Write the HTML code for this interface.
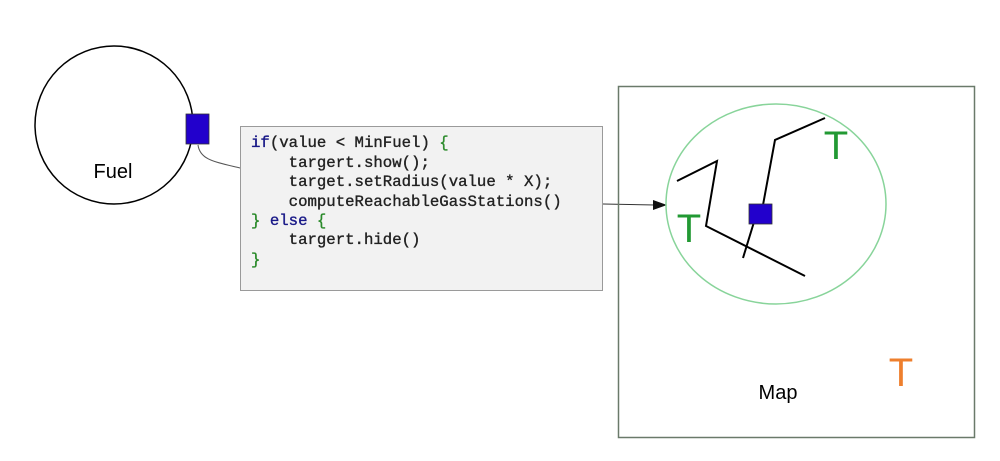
<!DOCTYPE html><html><head><style>body{margin:0;background:#fff} .c text{white-space:pre}</style></head><body>
<svg width="1000" height="456" xmlns="http://www.w3.org/2000/svg">
<circle cx="114" cy="125" r="79" fill="none" stroke="#000" stroke-width="1.5"/>
<text x="113" y="178" font-family="Liberation Sans, sans-serif" font-size="20" text-anchor="middle">Fuel</text>
<path d="M198 145 C200 160 215 162 240 168" fill="none" stroke="#555" stroke-width="1"/>
<rect x="186" y="114" width="23" height="30" fill="#2200cc" stroke="#333" stroke-width="0.8"/>
<rect x="240.5" y="126.5" width="362" height="164" fill="#f2f2f2" stroke="#9a9a9a"/>
<g class="c" font-family="Liberation Mono, monospace" font-size="15.7" fill="#222" stroke="#222" stroke-width="0.35">
<text x="251" y="147"><tspan fill="#1a1a88" stroke="#1a1a88">if</tspan>(value &lt; MinFuel) <tspan fill="#2a8a2a" stroke="#2a8a2a">{</tspan></text>
<text x="251" y="167">    targert.show();</text>
<text x="251" y="186">    target.setRadius(value * X);</text>
<text x="251" y="206">    computeReachableGasStations()</text>
<text x="251" y="225"><tspan fill="#2a8a2a" stroke="#2a8a2a">}</tspan> <tspan fill="#1a1a88" stroke="#1a1a88">else</tspan> <tspan fill="#2a8a2a" stroke="#2a8a2a">{</tspan></text>
<text x="251" y="244">    targert.hide()</text>
<text x="251" y="264"><tspan fill="#2a8a2a" stroke="#2a8a2a">}</tspan></text>
</g>
<line x1="603" y1="204" x2="655" y2="205" stroke="#333" stroke-width="1"/>
<polygon points="653,200 667,205 653,210" fill="#111"/>
<rect x="618.5" y="86.5" width="356" height="351" fill="none" stroke="#6a7a6a" stroke-width="1.5"/>
<ellipse cx="776" cy="204" rx="110" ry="100" fill="none" stroke="#88d49a" stroke-width="1.5"/>
<polyline points="677,181 717,161 706,226 805,276" fill="none" stroke="#000" stroke-width="2"/>
<polyline points="743,258 754,222" fill="none" stroke="#000" stroke-width="2"/>
<polyline points="763,205 775,140 825,118" fill="none" stroke="#000" stroke-width="2"/>
<rect x="749" y="204" width="23" height="20" fill="#2200cc" stroke="#333" stroke-width="0.8"/>
<g font-family="Liberation Sans, sans-serif" font-size="40" text-anchor="middle">
<text x="836" y="159" fill="#229933">T</text>
<text x="689" y="242" fill="#229933">T</text>
<text x="901" y="386" fill="#ee7f2d">T</text>
</g>
<text x="778" y="399" font-family="Liberation Sans, sans-serif" font-size="20" text-anchor="middle">Map</text>
</svg>
</body></html>
